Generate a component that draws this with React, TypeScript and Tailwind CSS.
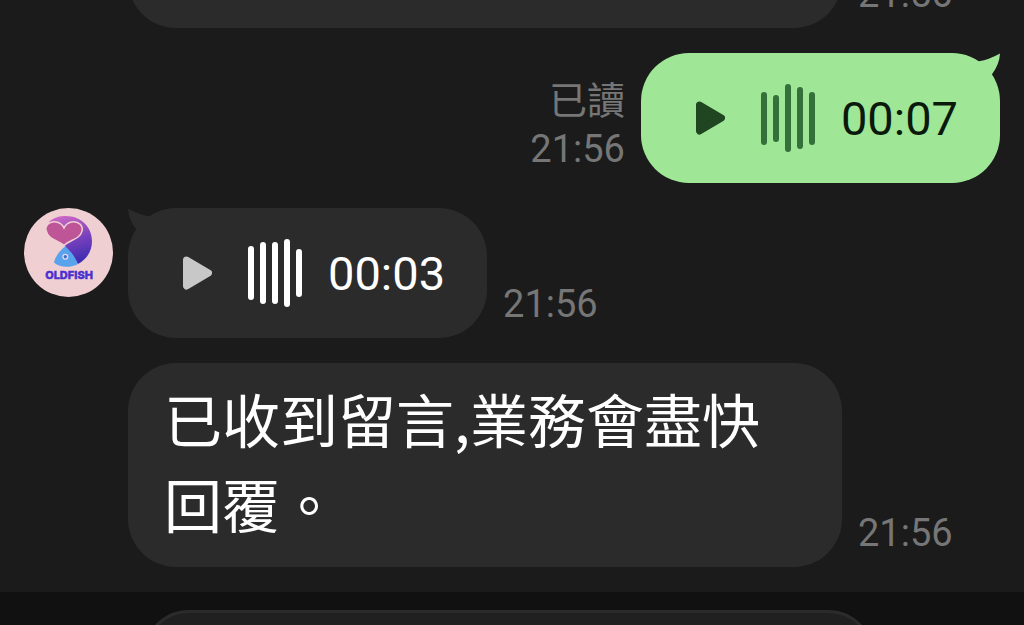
import React from "react";

type Tone = "sent" | "received";
type Bar = [top: number, bottom: number];

function Tail({ tone }: { tone: Tone }) {
  return tone === "sent" ? (
    <svg className="absolute top-0 right-0 h-8 w-9 text-[#9fe796]" viewBox="0 0 36 32" aria-hidden="true">
      <path d="M10 14 L15 8.3 Q25 6.5 36 0.4 Q35.5 11 28 21.3 L22 24 Z" fill="currentColor" />
    </svg>
  ) : (
    <svg className="absolute top-0 left-0 h-8 w-9 text-[#2b2b2b]" viewBox="0 0 36 32" aria-hidden="true">
      <path d="M26 14 L21 8.3 Q11 6.5 0 0.4 Q0.5 11 8 21.3 L14 24 Z" fill="currentColor" />
    </svg>
  );
}

function VoiceMessage({ tone, bars, length }: { tone: Tone; bars: Bar[]; length: string }) {
  const sent = tone === "sent";
  return (
    <div
      className={
        sent
          ? "relative flex items-center rounded-[48px] bg-[#9fe796] py-8 pr-[42px] pl-[54px] text-[#0b190b]"
          : "relative flex items-center rounded-[48px] bg-[#2b2b2b] py-8 pr-[42px] pl-[54px] text-white"
      }
    >
      <Tail tone={tone} />
      <button type="button" aria-label="播放" className={sent ? "text-[#204521]" : "text-[#c8c8c8]"}>
        <svg className="h-9 w-[30px]" viewBox="0 0 30 36" aria-hidden="true">
          <path
            d="M4.5 5 L26.5 18 L4.5 31 Z"
            fill="currentColor"
            stroke="currentColor"
            strokeWidth="7"
            strokeLinejoin="round"
          />
        </svg>
      </button>
      <svg
        className={sent ? "ml-9 h-[66px] w-[54px] overflow-visible text-[#34703a]" : "ml-9 h-[66px] w-[54px] overflow-visible text-white"}
        viewBox="0 0 54 66"
        aria-hidden="true"
      >
        {bars.map(([top, bottom], i) => (
          <rect key={i} x={i * 12} y={top} width="6" height={bottom - top} rx="3" fill="currentColor" />
        ))}
      </svg>
      <span className="ml-[26px] pt-0.5 text-[47px] leading-[48px]">{length}</span>
    </div>
  );
}

function Time({ children }: { children: string }) {
  return <time className="text-[38px] leading-[48px] text-[#767676]">{children}</time>;
}

function Avatar() {
  return (
    <svg className="h-[88px] w-[88px] shrink-0 overflow-visible" viewBox="0 0 88 88" role="img" aria-label="OLDFISH">
      <defs>
        <linearGradient id="fishBody" x1="0.35" y1="0" x2="0.6" y2="1">
          <stop offset="0" stopColor="#c866c4" />
          <stop offset="0.5" stopColor="#7b42bd" />
          <stop offset="1" stopColor="#3b2bb0" />
        </linearGradient>
      </defs>
      <circle cx="44.5" cy="44.5" r="44.5" fill="#f0cfd3" />
      <path d="M25 14 C30 9 36 8 42 8 C57 8 68 19 68 33 C68 43 63 51 54 56 L41 38 L30 26 Z" fill="url(#fishBody)" />
      <path
        d="M40 37.5 C36 33.5 30 32.5 26 29 C22 25.5 20.5 20 23.5 16.5 C28 12 37 13 40 20 C43 13 52 12 56.5 16.5 C60 20.5 58 26 54 29 C50 32 44 33.5 40 37.5 Z"
        fill="#bd5596"
        stroke="#f0cfd3"
        strokeWidth="1.5"
      />
      <path d="M41 38.5 C36 42 31 49 30 54.5 C36 60 47 60 54 56 C51 49 47 43 41 38.5 Z" fill="#58a3ec" />
      <circle cx="41.3" cy="48.7" r="3" fill="#e9d9ee" />
      <circle cx="41.3" cy="48.7" r="1.7" fill="#3a6fd0" />
      <text
        x="45"
        y="71"
        textAnchor="middle"
        fill="#4830cf"
        stroke="#4830cf"
        strokeWidth="0.4"
        className="font-['Inter',sans-serif] text-[11px] font-extrabold"
      >
        OLDFISH
      </text>
    </svg>
  );
}

function Bubble({ children }: { children: string }) {
  return (
    <p className="max-w-[714px] rounded-[48px] bg-[#2b2b2b] px-9 pt-[13px] pb-[21px] font-['Noto_Sans_CJK_TC',sans-serif] text-[58px] leading-[85px] text-white">
      {children}
    </p>
  );
}

export default function App() {
  return (
    <div
      lang="zh-TW"
      className="flex h-screen flex-col overflow-hidden bg-[#1b1b1b] font-['Roboto','Noto_Sans_CJK_TC',sans-serif]"
    >
      <main className="flex min-h-0 flex-1 flex-col justify-end gap-[25px] overflow-hidden px-6 pb-[25px]">
        <div className="flex items-end gap-4 pl-[104px]">
          <div className="h-24 w-[714px] rounded-[48px] bg-[#2b2b2b]" />
          <div className="flex pb-2.5">
            <Time>21:56</Time>
          </div>
        </div>

        <div className="flex items-end justify-end gap-4">
          <div className="flex flex-col items-end pb-2.5">
            <span className="text-[38px] leading-[48px] text-[#767676]">已讀</span>
            <Time>21:56</Time>
          </div>
          <VoiceMessage tone="sent" length="00:07" bars={[[7, 60], [10, 57], [-1, 67], [2, 64], [7, 60]]} />
        </div>

        <div className="flex items-end gap-4">
          <div className="flex items-start gap-4">
            <Avatar />
            <VoiceMessage tone="received" length="00:03" bars={[[6, 60], [2, 64], [2, 64], [-1, 67], [9, 57]]} />
          </div>
          <div className="flex pb-2.5">
            <Time>21:56</Time>
          </div>
        </div>

        <div className="flex items-end gap-4 pl-[104px]">
          <Bubble>已收到留言,業務會盡快回覆。</Bubble>
          <div className="flex pb-2.5">
            <Time>21:56</Time>
          </div>
        </div>
      </main>

      <footer className="h-[33px] shrink-0 overflow-hidden bg-[#111111] pt-[18px] pr-[150px] pl-[143px]">
        <input
          type="text"
          aria-label="輸入訊息"
          className="block h-[92px] w-full rounded-[46px] border-3 border-[#2b2b2b] bg-[#202020] px-10 text-white outline-none"
        />
      </footer>
    </div>
  );
}
